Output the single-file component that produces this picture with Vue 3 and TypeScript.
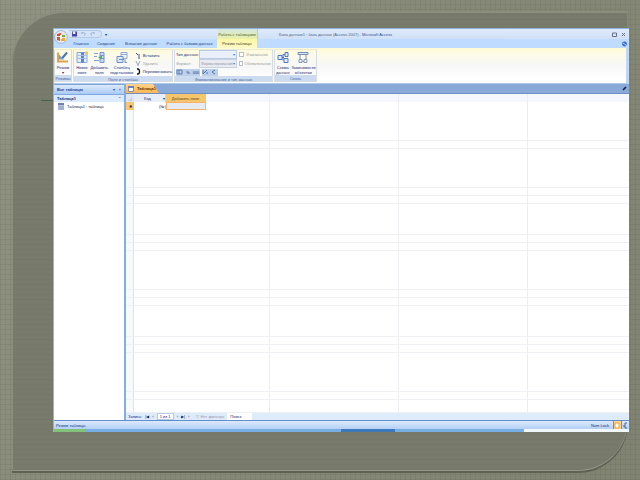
<script setup lang="ts">
import { ref } from 'vue'

const tabs = ['Главная', 'Создание', 'Внешние данные', 'Работа с базами данных', 'Режим таблицы']
const activeTab = ref('Режим таблицы')
const record = ref('1 из 1')
// Heights of the empty bands between ruled lines of the datasheet
const bands = [31, 8, 39, 8, 8, 31, 8, 8, 39, 8, 8, 31, 8, 8, 39, 8, 13]
</script>

<template>
  <main class="slide">
    <div class="panel" aria-hidden="true"></div>
    <div class="accent" aria-hidden="true"></div>
    <section class="window">
      <header class="top">
        <button class="office" aria-label="Office">
          <svg viewBox="0 0 14 14">
            <circle cx="7" cy="7" r="6.4" fill="#e3e9f3" stroke="#9aa9c3" stroke-width=".8" />
            <path d="M3 4l4-1v3H3z" fill="#e24a1c" />
            <path d="M8 5h3v2H8z" fill="#79aa3c" />
            <path d="M3 7h3v4l-3-1z" fill="#d9552b" />
            <path d="M7 8h4v3H7z" fill="#efad2d" />
            <path d="M6 5h2v4H6z" fill="#fff" />
          </svg>
        </button>
        <div class="bars">
          <div class="titlebar">
            <div class="quick">
              <button aria-label="Сохранить">
                <svg viewBox="0 0 6 6"><path d="M0 0h6v6H0z" fill="#4543a5" /><path d="M1 0h3v3H1z" fill="#eef" /></svg>
              </button>
              <button aria-label="Отменить">
                <svg viewBox="0 0 6 6"><path d="M1 3V1M1 2c3-2 5 1 3 3" fill="none" stroke="#8ba0c8" /></svg>
              </button>
              <button aria-label="Вернуть">
                <svg viewBox="0 0 6 6"><path d="M5 3V1M5 2C2 0 0 3 2 5" fill="none" stroke="#8ba0c8" /></svg>
              </button>
            </div>
            <button class="more" aria-label="Настройка панели">▾</button>
            <span class="context">Работа с таблицами</span>
            <h1>База данных1 : база данных (Access 2007) - <b>Microsoft Access</b></h1>
            <div class="controls">
              <button aria-label="Развернуть"><svg viewBox="0 0 5 5"><path d="M.5 1h4v3.5h-4z" fill="none" stroke="#667089" /></svg></button>
              <button aria-label="Закрыть"><svg viewBox="0 0 5 5"><path d="M1 1l3 3M4 1L1 4" stroke="#657086" /></svg></button>
            </div>
          </div>
          <nav class="tabs">
            <button v-for="(t, i) in tabs" :key="t" :class="['tab', 'tab' + i, { active: t === activeTab }]" @click="activeTab = t">{{ t }}</button>
            <button class="help" aria-label="Справка">
              <svg viewBox="0 0 5 6"><circle cx="2.5" cy="3" r="2.4" fill="#346bd0" /><path d="M1 2l3 2" stroke="#bcd5ff" /></svg>
            </button>
          </nav>
        </div>
      </header>

      <div class="ribbon">
        <div class="group g1">
          <div class="body">
            <button class="big w16">
              <svg viewBox="0 0 12 12">
                <path d="M1 1v9h10" fill="none" stroke="#d9a548" stroke-width="2" />
                <path d="M10 1L5 7" stroke="#4a74b4" stroke-width="2" />
                <path d="M2 3l5 5H2z" fill="#7b9fd4" />
              </svg>
              <span>Режим</span><i>▾</i>
            </button>
          </div>
          <div class="caption">Режимы</div>
        </div>
        <div class="group g2">
          <div class="body">
            <button class="big w16">
              <svg viewBox="0 0 12 12">
                <path d="M1 1h10v10H1z" fill="#e3edfb" stroke="#8aa6d6" />
                <path d="M5 1h3v10H5z" fill="#5c82c8" /><path d="M1 4h10M1 7h10" stroke="#a3bee8" />
                <path d="M9 0h3v3H9z" fill="#eec755" />
              </svg>
              <span>Новое поле</span>
            </button>
            <button class="big w19">
              <svg viewBox="0 0 12 12">
                <path d="M7 1h4v10H7z" fill="#c7d9f4" stroke="#7396cd" /><path d="M7 4h4M7 7h4" stroke="#7396cd" />
                <path d="M1 2h4M1 5h3M1 9h5" stroke="#82a2d4" /><path d="M9 4v4L5 6z" fill="#4fae67" />
              </svg>
              <span>Добавить поля</span>
            </button>
            <button class="big w26">
              <svg viewBox="0 0 12 12">
                <path d="M5 1h6v6H5z" fill="#edf3fd" stroke="#92a9cf" /><path d="M5 3h6" stroke="#92a9cf" />
                <path d="M1 5h6v6H1z" fill="#dce8f9" stroke="#6d8dc4" /><path d="M3 8h5M9 8v3h2" stroke="#6d8dc4" fill="none" />
              </svg>
              <span>Столбец подстановок</span>
            </button>
            <div class="small">
              <button>
                <svg viewBox="0 0 6 7"><path d="M1 1l2 2M4 2v5" stroke="#364e91" fill="none" /></svg>Вставить
              </button>
              <button class="off">
                <svg viewBox="0 0 6 7"><path d="M1 1l2 4 2-4M3 4v2" stroke="#9ba6ba" fill="none" /></svg>Удалить
              </button>
              <button>
                <svg viewBox="0 0 6 7"><path d="M2 1h1c2 0 2 5 0 5H2" stroke="#111" fill="none" stroke-width="1.3" /></svg>Переименовать
              </button>
            </div>
          </div>
          <div class="caption">Поля и столбцы</div>
        </div>
        <div class="group g3">
          <div class="body format">
            <label for="dtype">Тип данных:</label>
            <div class="pick"><select id="dtype"><option></option></select></div>
            <label class="check off"><input type="checkbox" />Уникальное</label>
            <label for="fmt" class="off">Формат:</label>
            <div class="pick off"><select id="fmt"><option>Форматирование</option></select></div>
            <label class="check off"><input type="checkbox" />Обязательное</label>
            <div class="numbers">
              <button aria-label="Денежный"><svg viewBox="0 0 7 6"><path d="M1 1h5v4H1zM3 1v4" stroke="#647faf" fill="none" /></svg></button>
              <button>%</button>
              <button>000</button>
              <button class="split" aria-label="Увеличить разрядность"><svg viewBox="0 0 7 6"><path d="M1 1v4l4-4M4 4h2" stroke="#5876ad" fill="none" /></svg></button>
              <button aria-label="Уменьшить разрядность"><svg viewBox="0 0 7 6"><path d="M5 1L2 3l3 2" stroke="#5876ad" fill="none" /></svg></button>
            </div>
          </div>
          <div class="caption">Форматирование и тип данных</div>
        </div>
        <div class="group g4">
          <div class="body">
            <button class="big w16">
              <svg viewBox="0 0 12 12">
                <path d="M1 4h4v4H1zM8 1h3v4H8zM7 7h4v4H7zM5 6h2M6 6V3h2M6 6v3" fill="#e4edfb" stroke="#4f77bd" />
              </svg>
              <span>Схема данных</span>
            </button>
            <button class="big w26">
              <svg viewBox="0 0 12 12">
                <path d="M1 1h10v2H1z" fill="#d7e4f8" stroke="#7890b8" /><path d="M3 3v6M9 3v6" stroke="#7890b8" />
                <path d="M2 8h3v3H2zM7 8h3v3H7zM5 10h2" fill="#eef4fd" stroke="#8a9bb8" />
              </svg>
              <span>Зависимости объектов</span>
            </button>
          </div>
          <div class="caption">Связь</div>
        </div>
      </div>

      <div class="work">
        <aside class="side">
          <div class="side-head"><b>Все таблицы</b><button aria-label="Меню таблиц">▾</button><button aria-label="Свернуть область">«</button></div>
          <div class="side-group"><b>Таблица1</b><button aria-label="Свернуть группу">⌃</button></div>
          <a class="side-item" href="#table">
            <svg viewBox="0 0 6 7"><path d="M0 0h6v7H0z" fill="#b5c4dc" /><path d="M0 1h6" stroke="#6882ad" stroke-width="2" /><path d="M0 4h6M0 6h6" stroke="#7e93b6" stroke-width=".7" /></svg>
            Таблица1 : таблица
          </a>
        </aside>
        <div class="doc" id="table">
          <div class="doc-tabs">
            <button class="doc-tab">
              <svg viewBox="0 0 6 6"><path d="M.5.5h5v5h-5z" fill="#fff" stroke="#8c8ea3" /><path d="M0 1h6" stroke="#6d82b9" stroke-width="2" /></svg>
              Таблица1
            </button>
            <button class="doc-close" aria-label="Закрыть таблицу">
              <svg viewBox="0 0 5 5"><path d="M1 4l3-3" stroke="#12203c" stroke-width="1.6" /></svg>
            </button>
          </div>
          <div class="sheet">
            <table>
              <colgroup><col class="c-sel" /><col class="c-key" /><col class="c-add" /><col class="c-gap" /><col class="c-wide" /><col class="c-wide" /><col /></colgroup>
              <thead>
                <tr>
                  <th class="corner"><svg viewBox="0 0 8 8"><path d="M2 7l5-5v5z" fill="#c9d2e4" /></svg></th>
                  <th class="key">Код <i>▾</i></th>
                  <th class="add">Добавить поле</th>
                  <th></th><th></th><th></th><th></th>
                </tr>
              </thead>
              <tbody>
                <tr class="record">
                  <td class="mark">✱</td><td class="new">(№)</td><td class="current"></td>
                  <td></td><td></td><td></td><td></td>
                </tr>
                <tr v-for="(h, i) in bands" :key="i" class="band" :style="{ height: h + 'px' }">
                  <td class="sel"></td><td colspan="3"></td><td></td><td></td><td></td>
                </tr>
              </tbody>
            </table>
          </div>
          <div class="records">
            <label for="rec">Запись:</label>
            <button aria-label="Первая">|◀</button><button aria-label="Предыдущая">‹</button>
            <input id="rec" v-model="record" />
            <button aria-label="Следующая">›</button><button aria-label="Последняя">▶|</button><button aria-label="Новая">›</button>
            <span class="filter">▽ Нет фильтра</span>
            <input class="find" aria-label="Поиск" value="Поиск" />
          </div>
        </div>
      </div>

      <footer>
        <div class="status">
          <span class="mode">Режим таблицы</span>
          <span class="lock">Num Lock</span>
          <button class="view on" aria-label="Режим таблицы"><svg viewBox="0 0 6 7"><path d="M1 1h4v5H1z" fill="#fff" stroke="#e8a23d" /></svg></button>
          <button class="view" aria-label="Конструктор"><svg viewBox="0 0 6 7"><path d="M1 4h2M5 1H3v5h2" stroke="#53668c" fill="none" /></svg></button>
        </div>
        <div class="taskbar"><span class="start"></span><span class="apps"></span><span class="pressed"></span><span class="apps2"></span><span class="tray"></span></div>
      </footer>
    </section>
  </main>
</template>

<style>
body { background: #848775; }
</style>

<style scoped>
* { box-sizing: border-box; }
.slide {
  position: relative;
  display: flex;
  min-height: 100vh;
  padding: 28px 11px 48px 53px;
  overflow: hidden;
  font: 4px/5px "Liberation Sans", sans-serif;
  color: #142a72;
  background:
    repeating-linear-gradient(0deg, rgba(70, 72, 55, .1) 0 1px, transparent 1px 5px),
    repeating-linear-gradient(90deg, rgba(70, 72, 55, .1) 0 1px, transparent 1px 5px),
    linear-gradient(120deg, #909382, #868977 50%, #808371);
}
.panel {
  position: absolute;
  inset: 11px 12px 9px 12px;
  border-radius: 52px 0 50px 0;
  border-top: 2px solid #8b8e7d;
  border-left: 1px solid #8b8e7d;
  border-right: 1px solid #85887a;
  border-bottom: 1px solid #94978a;
  background: repeating-linear-gradient(0deg, rgba(50, 52, 40, .04) 0 1px, transparent 1px 5px), #787b6b;
  box-shadow: 0 2px 0 #5f6153;
}
.accent { position: absolute; left: 41px; top: 100px; width: 12px; height: 1px; background: #48644c; }
.window {
  position: relative;
  display: flex;
  flex: 1;
  flex-direction: column;
  min-width: 0;
  background: #fff;
  border-left: 1px solid #8db2e3;
}
button {
  padding: 0;
  border: 0;
  background: none;
  color: inherit;
  font: inherit;
  white-space: nowrap;
}
svg { display: block; flex: none; }
i { font-style: normal; }
.top { display: flex; height: 20px; background: linear-gradient(#8fb2df 0 1px, #dfebfa 1px, #cfe0f7 11px, #bfdbff 11px); }
.office { width: 15px; padding-top: 1px; align-self: flex-start; }
.office svg { width: 14px; height: 16px; }
.bars { display: flex; flex: 1; flex-direction: column; min-width: 0; }
.titlebar { display: flex; height: 11px; align-items: center; padding-top: 1px; }
.quick {
  display: flex;
  gap: 4px;
  width: 33px;
  height: 8px;
  align-items: center;
  padding-left: 3px;
  border: 1px solid #b2c8e7;
  border-left: 0;
  border-radius: 0 4px 4px 0;
  background: #d5e3f7;
}
.quick svg { width: 5px; height: 6px; }
.more { width: 8px; }
.context {
  width: 41px;
  height: 10px;
  margin-left: 107px;
  padding-top: 3px;
  background: linear-gradient(#d7e6e2, #eaf0a8);
  border-right: 1px solid #c6cf9c;
  color: #4d662f;
  text-align: center;
  white-space: nowrap;
}
h1 { margin: 0 0 0 21px; font: 4px/5px "Liberation Sans", sans-serif; color: #53627e; white-space: nowrap; }
h1 b { font-weight: 400; color: #2c4f98; }
.controls { display: flex; gap: 4px; margin-left: auto; padding-right: 3px; }
.controls svg { width: 5px; height: 5px; }
.tabs { display: flex; height: 9px; align-items: stretch; padding-left: 1px; color: #173d8a; }
.tab0 { width: 22px; }
.tab1 { width: 28px; }
.tab2 { width: 42px; }
.tab3 { width: 55px; }
.tab4 { width: 40px; }
.tab.active { background: linear-gradient(#fbf7a4, #fdf9c9); color: #4c4424; border-radius: 1px 1px 0 0; }
.help { margin-left: auto; padding-right: 2px; }
.help svg { width: 5px; height: 6px; }
.ribbon {
  display: flex;
  gap: 1px;
  height: 36px;
  padding: 1px 0;
  background: linear-gradient(#fffbd5, #fcfaea 8px, #f7f7f8 18px, #fff 32px);
  border-right: 3px solid #c0d6f3;
  border-bottom: 1px solid #aec8e8;
}
.group { display: flex; flex-direction: column; border: 1px solid #d7dce3; border-top-color: #ecebd6; border-radius: 1px; }
.g1 { width: 18px; }
.g2 { width: 100px; }
.g3 { width: 99px; }
.g4 { width: 43px; }
.body { display: flex; flex: 1; }
.caption { height: 7px; line-height: 7px; background: #cddbf0; color: #4665a5; text-align: center; white-space: nowrap; overflow: hidden; }
.big { display: flex; flex-direction: column; align-items: center; padding-top: 1px; white-space: normal; }
.big svg { width: 12px; height: 13px; margin-bottom: 1px; }
.w16 { width: 16px; }
.w19 { width: 19px; }
.w26 { width: 26px; }
.small { display: flex; flex-direction: column; flex: 1; justify-content: space-between; padding: 1px 0; }
.small button { display: flex; gap: 2px; align-items: center; height: 8px; }
.small svg { width: 6px; height: 7px; }
.small .off, .off { color: #96999f; }
.format { display: grid; grid-template-columns: 23px 38px 34px; grid-template-rows: 9px 9px 8px; align-items: center; padding-left: 1px; }
label { white-space: nowrap; }
.pick { position: relative; height: 9px; border: 1px solid #b8cbe5; background: #e9f0fb; }
.pick.off { background: #e8ecf2; border-color: #c9d1dd; }
.pick::after { content: "▾"; position: absolute; right: 1px; top: 1px; color: #5b76a8; pointer-events: none; }
select { display: block; width: 100%; height: 7px; padding: 0 1px; border: 0; appearance: none; background: transparent; color: inherit; font: inherit; }
.check { display: flex; gap: 2px; align-items: center; padding-left: 2px; }
.check input { width: 5px; height: 5px; margin: 0; appearance: none; border: 1px solid #b7bfcb; background: #fff; }
.numbers { grid-column: 1 / -1; display: flex; }
.numbers button { width: 8px; height: 7px; background: #bccfeb; color: #5272ab; font-weight: 700; }
.numbers svg { width: 7px; height: 6px; }
.numbers .split { margin-left: 2px; }
.work { display: flex; flex: 1; min-height: 0; }
.side { width: 72px; flex: none; border-right: 2px solid #86addf; background: #fff; }
.side-head, .side-group { display: flex; align-items: center; padding: 0 3px; }
.side-head { gap: 4px; height: 10px; background: linear-gradient(#dceafd, #a9caf6); border-top: 1px solid #7fa6da; color: #1c4190; }
.side-group { height: 8px; border-top: 1px solid #82a9df; background: #dcebff; }
.side b { margin-right: auto; }
.side-item { display: flex; gap: 3px; align-items: center; padding: 1px 4px; color: #222a3b; text-decoration: none; }
.side-item svg { width: 6px; height: 7px; }
.doc { display: flex; flex: 1; flex-direction: column; min-width: 0; }
.doc-tabs { display: flex; height: 10px; background: #89a9d8; border-bottom: 1px solid #6d91c8; }
.doc-tab {
  display: flex;
  gap: 3px;
  align-items: center;
  width: 33px;
  padding-left: 2px;
  background: linear-gradient(#ffd38a, #f9b756);
  clip-path: polygon(0 0, 27px 0, 33px 100%, 0 100%);
  color: #5c3000;
  font-weight: 700;
}
.doc-tab svg { width: 6px; height: 6px; }
.doc-close { margin-left: auto; padding-right: 2px; }
.doc-close svg { width: 5px; height: 5px; }
.sheet { flex: 1; overflow: hidden; }
table { width: 100%; table-layout: fixed; border-collapse: separate; border-spacing: 0; }
.c-sel { width: 8px; }
.c-key { width: 32px; }
.c-add { width: 40px; }
.c-gap { width: 64px; }
.c-wide { width: 129px; }
th, td { padding: 0; overflow: hidden; font-weight: 400; white-space: nowrap; line-height: 5px; }
thead tr, .record { height: 8px; }
th { background: #f4f7fd; border-right: 1px solid transparent; }
th:nth-child(n+4), .record td:nth-child(n+4), .band td { border-right: 1px solid #ebedf1; }
th:last-child, .record td:last-child, .band td:last-child { border-right: 0; }
.corner { background: #dfe6f3; }
.corner svg { width: 7px; height: 7px; }
.key { background: #e8eef8; border-right-color: #c7d2e5; text-align: right; }
.key i { margin-left: 11px; }
.add { background: #f5c66b; color: #654517; }
.mark { background: #fbc66d; text-align: center; }
.new { text-align: right; }
.current { border: 1px solid #f7b26c; background: #e8eaf2; }
.band td { border-bottom: 1px solid #eef0f3; }
.band .sel { border-right-color: #dfe3f1; background: #f8f9fd; }
.records { display: flex; gap: 3px; align-items: center; height: 7px; padding-left: 2px; background: #deebfb; }
.records input { width: 17px; height: 7px; padding: 0 2px; border: 1px solid #b5cbe9; background: #fff; color: inherit; font: inherit; }
.filter { margin-left: 4px; color: #969ca8; }
.records .find { width: 25px; border-color: #fff; }
.status { display: flex; align-items: center; height: 9px; padding-left: 2px; border-top: 1px solid #628dcc; background: linear-gradient(#dceafd, #b4d0f5); }
.mode { color: #173879; }
.lock { margin-left: auto; margin-right: 4px; }
.view { width: 8px; height: 8px; border-left: 1px solid #6f8fbe; }
.view.on { background: #ffd48b; }
.view svg { width: 6px; height: 7px; }
.taskbar { display: flex; height: 3px; background: #77aee4; }
.taskbar span { height: 3px; }
.start { flex: 31; background: #84c179; }
.apps { flex: 256; }
.pressed { flex: 54; background: #3d78b9; }
.apps2 { flex: 129; }
.tray { flex: 105; background: #f1f7ff; }
</style>
